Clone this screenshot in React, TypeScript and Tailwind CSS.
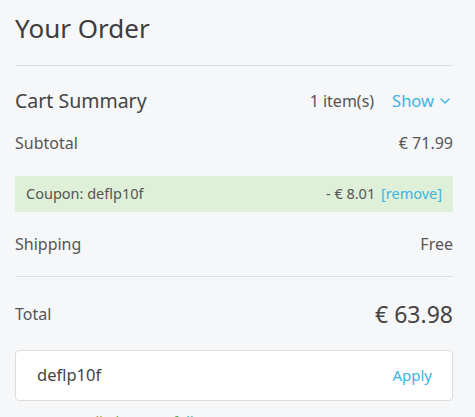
import React from "react";
import { ChevronDown } from "lucide-react";

const font = { fontFamily: "'Noto Sans', Lato, sans-serif" };

function Row(props: { label: string; value: React.ReactNode; className?: string }) {
  const { label, value, className } = props;
  return (
    <div className={`flex h-[30px] items-center justify-between ${className ?? ""}`}>
      <span className="text-[16px] text-[#555]">{label}</span>
      <span className="text-[16px] text-[#555]">{value}</span>
    </div>
  );
}

export default function App() {
  return (
    <div style={font} className="h-[417px] overflow-hidden bg-[#f6f7f9] pl-[15px] pr-[22px]">
      <div className="h-[66px] border-b border-[#dedfe2] pt-[12px]">
        <h1 className="text-[26px] leading-[32px] text-[#3d3d3d]">Your Order</h1>
      </div>

      <div className="mt-[20px] flex h-[30px] items-center justify-between">
        <span className="text-[19.5px] text-[#444]">Cart Summary</span>
        <div className="flex items-center">
          <span className="text-[16px] text-[#555]">1 item(s)</span>
          <button className="ml-[18px] flex items-center text-[16.5px] text-[#3db3e6]">
            Show
            <ChevronDown size={16} strokeWidth={2} className="ml-[3px]" />
          </button>
        </div>
      </div>

      <Row label="Subtotal" value="€ 71.99" className="mt-[12px]" />

      <div className="mt-[18px] flex h-[36px] items-center justify-between bg-[#dff0d8] pl-[11px] pr-[11px] text-[14.5px] text-[#555]">
        <span>Coupon: deflp10f</span>
        <span>
          - € 8.01 <span className="ml-[2px] text-[#3db3e6]">[remove]</span>
        </span>
      </div>

      <Row label="Shipping" value="Free" className="mt-[17px]" />

      <div className="mt-[17px] h-px bg-[#dedfe2]" />

      <div className="mt-[22px] flex h-[30px] items-center justify-between">
        <span className="text-[16px] text-[#555]">Total</span>
        <span className="text-[23px] text-[#444]">€ 63.98</span>
      </div>

      <div className="mt-[21px] flex h-[51px] items-center justify-between rounded-[4px] border border-[#dcdcdc] bg-white pl-[21px] pr-[20px]">
        <span className="text-[16.5px] text-[#444]">deflp10f</span>
        <span className="text-[15px] text-[#3db3e6]">Apply</span>
      </div>

      <p className="mt-[11px] text-[14px] leading-[20px] text-[#5ca85c]">Coupon applied successfully</p>
    </div>
  );
}
